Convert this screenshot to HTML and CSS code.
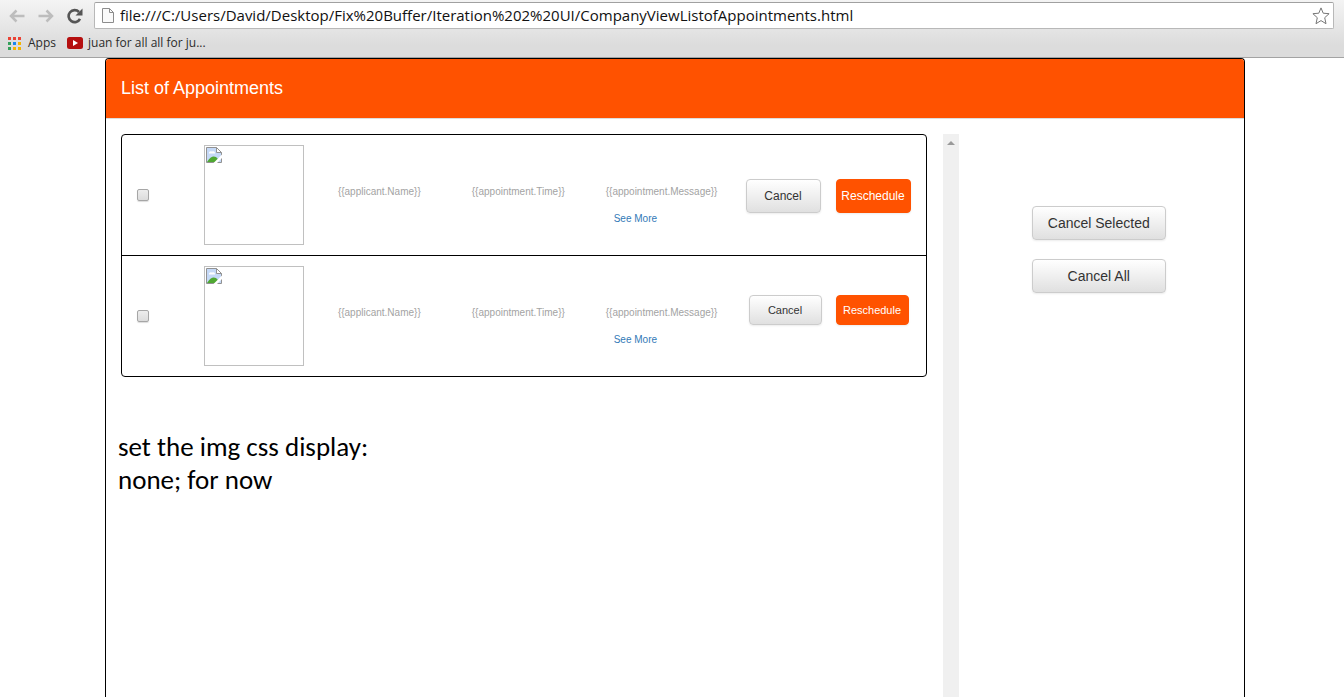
FILE: index.html
```html
<!DOCTYPE html>
<html lang="en">
<head>
<meta charset="utf-8">
<title>List of Appointments</title>
<link rel="stylesheet" href="styles.css">
</head>
<body>
<header class="browser">
  <div class="toolbar">
    <button class="nav-button" type="button" aria-label="Back">
      <svg width="16" height="14" viewBox="0 0 16 14"><path d="M15.500 7H2M7.500 1.500 2 7l5.500 5.500" fill="none" stroke="#bdbdbd" stroke-width="2.500"/></svg>
    </button>
    <button class="nav-button" type="button" aria-label="Forward">
      <svg width="16" height="14" viewBox="0 0 16 14"><path d="M.5 7H14M8.500 1.500 14 7l-5.500 5.500" fill="none" stroke="#bdbdbd" stroke-width="2.500"/></svg>
    </button>
    <button class="nav-button" type="button" aria-label="Reload">
      <svg width="16" height="16" viewBox="0 0 16 16"><path d="M13 10.800A6 6 0 1 1 12 4" fill="none" stroke="#555" stroke-width="2.600"/><path d="M15.500 0.500V7.500H8.500z" fill="#555"/></svg>
    </button>
    <div class="omnibox">
      <svg width="12" height="16" viewBox="0 0 12 16"><path d="M.5.5h7l4 4v10h-11z" fill="#fafafa" stroke="#8c8c8c"/><path d="M7.500.5v4h4" fill="none" stroke="#8c8c8c"/></svg>
      <input class="address" type="text" aria-label="Address" value="file:///C:/Users/David/Desktop/Fix%20Buffer/Iteration%202%20UI/CompanyViewListofAppointments.html">
      <button class="star" type="button" aria-label="Bookmark this page">
        <svg width="18" height="18" viewBox="0 0 18 18"><path d="M9 .9 11.200 6.200 17.100 6.700 12.700 10.700 14 16.700 9 13.600 4 16.700 5.300 10.700.9 6.700 6.800 6.200z" fill="#fff" stroke="#777" stroke-linejoin="round"/></svg>
      </button>
    </div>
  </div>
  <nav class="bookmarks">
    <a class="bookmark" href="#apps">
      <svg width="13" height="13" viewBox="0 0 13 13"><path d="M0 0h3v3H0zM5 0h3v3H5zM10 0h3v3h-3z" fill="#ea4335"/><path d="M0 5h3v3H0zM0 10h3v3H0z" fill="#34a05a"/><path d="M5 5h3v3H5z" fill="#1a86f0"/><path d="M10 5h3v3h-3zM5 10h3v3H5zM10 10h3v3h-3z" fill="#f4b400"/></svg>
      <span>Apps</span>
    </a>
    <a class="bookmark bookmark-video" href="#video">
      <svg width="16" height="12" viewBox="0 0 16 12"><rect width="16" height="12" rx="2.500" fill="#b50f0f"/><path d="M6 3v6l5-3z" fill="#fff"/></svg>
      <span>juan for all all for ju...</span>
    </a>
  </nav>
</header>

<main class="page">
  <section class="panel">
    <h1 class="panel-title">List of Appointments</h1>
    <div class="panel-body">
      <div class="main-column">
        <div class="content">
          <ul class="appointments">
            <li class="appointment">
              <div class="cell cell-check"><input class="check" type="checkbox" aria-label="Select appointment"></div>
              <div class="cell cell-photo">
                <div class="photo">
                  <svg width="16" height="16" viewBox="0 0 16 16"><path d="M.5.5h10l5 5v10H.5z" fill="#c5d9f7"/><path d="M3 6.500a2 2 0 0 1 3-2 2 2 0 0 1 3 2z" fill="#fff"/><path d="M1 15q6-9 11-3v3z" fill="#4fa832"/><path d="M.5 15.500V.5h10l5 5v10z" fill="none" stroke="#929292"/><path d="M10.500.5v5h5z" fill="#fff" stroke="#929292"/><path d="M7.500 16 16 7.500V11l-5 5z" fill="#fff"/></svg>
                </div>
              </div>
              <div class="cell cell-text">{{applicant.Name}}</div>
              <div class="cell cell-text">{{appointment.Time}}</div>
              <div class="cell cell-text">{{appointment.Message}}<a class="more" href="#more-1">See More</a></div>
              <div class="cell cell-actions">
                <button class="button" type="button">Cancel</button>
                <button class="button button-primary" type="button">Reschedule</button>
              </div>
            </li>
            <li class="appointment">
              <div class="cell cell-check"><input class="check" type="checkbox" aria-label="Select appointment"></div>
              <div class="cell cell-photo">
                <div class="photo">
                  <svg width="16" height="16" viewBox="0 0 16 16"><path d="M.5.5h10l5 5v10H.5z" fill="#c5d9f7"/><path d="M3 6.500a2 2 0 0 1 3-2 2 2 0 0 1 3 2z" fill="#fff"/><path d="M1 15q6-9 11-3v3z" fill="#4fa832"/><path d="M.5 15.500V.5h10l5 5v10z" fill="none" stroke="#929292"/><path d="M10.500.5v5h5z" fill="#fff" stroke="#929292"/><path d="M7.500 16 16 7.500V11l-5 5z" fill="#fff"/></svg>
                </div>
              </div>
              <div class="cell cell-text">{{applicant.Name}}</div>
              <div class="cell cell-text">{{appointment.Time}}</div>
              <div class="cell cell-text">{{appointment.Message}}<a class="more" href="#more-2">See More</a></div>
              <div class="cell cell-actions compact">
                <button class="button" type="button">Cancel</button>
                <button class="button button-primary" type="button">Reschedule</button>
              </div>
            </li>
          </ul>
          <p class="note">set the img css display:<br>none; for now</p>
        </div>
        <div class="scrollbar"><svg width="8" height="4" viewBox="0 0 8 4"><path d="M4 0 8 4H0z" fill="#9a9a9a"/></svg></div>
      </div>
      <aside class="bulk">
        <button class="button bulk-button" type="button">Cancel Selected</button>
        <button class="button bulk-button" type="button">Cancel All</button>
      </aside>
    </div>
  </section>
</main>
</body>
</html>
```
FILE: styles.css
```css
* { box-sizing: border-box; }

body {
  margin: 0;
  min-height: 100vh;
  display: flex;
  flex-direction: column;
  background: #fff;
  font-family: "Liberation Sans", Arial, sans-serif;
}

svg { display: block; flex: none; }

.browser {
  background: linear-gradient(#f4f4f4, #dcdcdc 80%);
  border-bottom: 1px solid #a3a3a3;
  font-family: "Open Sans", "Noto Sans", sans-serif;
}

.toolbar {
  display: flex;
  align-items: center;
  padding: 2px 10px 0 9px;
}

.nav-button {
  width: 29px;
  padding: 0;
  border: 0;
  background: none;
}

.omnibox {
  flex: 1;
  display: flex;
  align-items: center;
  height: 27px;
  margin-left: -2px;
  padding: 0 3px 0 7px;
  border: 1px solid #b8b8b8;
  border-top-color: #a0a0a0;
  border-radius: 2px;
  background: #fff;
}

.address {
  flex: 1;
  min-width: 0;
  padding: 0 6px 1px;
  border: 0;
  outline: 0;
  background: none;
  color: #111;
  font: 15px/24px "Open Sans", "Noto Sans", sans-serif;
}

.star {
  padding: 0;
  border: 0;
  background: none;
}

.bookmarks {
  display: flex;
  gap: 11px;
  height: 28px;
  padding: 0 8px;
}

.bookmark {
  display: flex;
  align-items: center;
  gap: 7px;
  color: #2b2b2b;
  font-size: 12px;
  line-height: 16px;
  text-decoration: none;
}

.bookmark-video { gap: 5px; }

.page {
  flex: 1;
  display: flex;
  justify-content: center;
  padding-left: 6px;
}

.panel {
  width: 100%;
  max-width: 1140px;
  display: flex;
  flex-direction: column;
  border: 1px solid #000;
  border-bottom: 0;
  border-radius: 4px 4px 0 0;
  overflow: hidden;
}

.panel-title {
  margin: 0;
  padding: 18px 15px 19px;
  border-bottom: 1px solid #ddd;
  background: #ff5200;
  color: #fff;
  font-size: 18px;
  font-weight: 400;
  line-height: 22px;
}

.panel-body {
  flex: 1;
  display: grid;
  grid-template-columns: 3fr 1fr;
  padding-top: 15px;
}

.main-column {
  display: flex;
  gap: 16px;
  padding: 0 1px 0 15px;
}

.content { flex: 1; }

.appointments {
  margin: 0;
  padding: 0;
  border: 1px solid #000;
  border-radius: 4px;
  list-style: none;
}

.appointment {
  display: grid;
  grid-template-columns: 1fr 2fr 2fr 2fr 2fr 3fr;
  padding: 10px 0;
}

.appointment + .appointment { border-top: 1px solid #000; }

.cell {
  min-width: 0;
  padding-left: 15px;
}

.cell-check { align-self: center; }

.check {
  display: block;
  appearance: none;
  width: 12px;
  height: 12px;
  margin: 0;
  border: 1px solid #a6a6a6;
  border-radius: 2px;
  background: linear-gradient(#ededed, #dcdcdc);
  box-shadow: 0 1px 1px #ddd;
}

.photo {
  width: 100px;
  height: 100px;
  padding: 1px;
  border: 1px solid #c0c0c0;
}

.cell-text {
  padding-top: 40px;
  color: #a3a3a3;
  font-size: 10px;
  line-height: 14px;
}

.more {
  display: block;
  margin-top: 13px;
  padding-left: 8px;
  color: #337ab7;
  text-decoration: none;
}

.cell-actions {
  display: flex;
  align-items: flex-start;
  justify-content: flex-end;
  gap: 15px;
  padding: 34px 15px 0 0;
}

.button {
  height: 34px;
  padding: 0;
  border: 1px solid #ccc;
  border-radius: 4px;
  background: linear-gradient(#fff, #e0e0e0);
  box-shadow: 0 1px 2px rgba(0, 0, 0, 0.08);
  color: #333;
  font-family: "Liberation Sans", Arial, sans-serif;
  font-size: 14px;
  line-height: 20px;
  text-align: center;
}

.button-primary {
  border-color: #ff5200;
  background: #ff5200;
  color: #fff;
}

.cell-actions .button {
  width: 75px;
  font-size: 12px;
}

.cell-actions.compact {
  gap: 14px;
  padding: 29px 17px 0 0;
}

.compact .button {
  width: 73px;
  height: 30px;
  font-size: 11px;
}

.note {
  margin: 53px 0 0 -3px;
  color: #000;
  font-family: Carlito, Lato, sans-serif;
  font-size: 27px;
  line-height: 33px;
}

.scrollbar {
  display: flex;
  justify-content: center;
  width: 16px;
  padding-top: 7px;
  background: #f0f0f0;
}

.bulk {
  display: flex;
  flex-direction: column;
  align-items: center;
  gap: 19px;
  padding: 72px 6px 0 0;
}

.bulk-button { width: 134px; }
```
